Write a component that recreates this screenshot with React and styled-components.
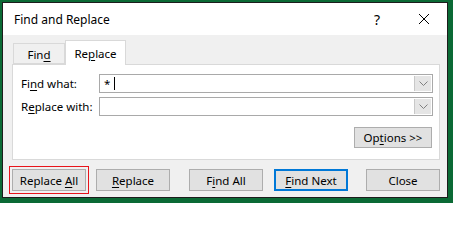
import styled, { createGlobalStyle } from "styled-components";

const Global = createGlobalStyle`
  html, body {
    margin: 0;
    padding: 0;
    background: #fff;
  }
  * {
    box-sizing: border-box;
  }
`;

const Frame = styled.div`
  width: 453px;
  height: 203px;
  background: #0b6a35;
  padding: 2px 5px 5px 2px;
  font-family: "Noto Sans", "DejaVu Sans", sans-serif;
  font-size: 11.5px;
  color: #000;
`;

const Window = styled.div`
  height: 100%;
  border: 1px solid #1c1c1c;
  background: #f0f0f0;
  display: flex;
  flex-direction: column;
`;

const TitleBar = styled.div`
  height: 32px;
  background: #fff;
  display: flex;
  align-items: center;
  padding-left: 11px;
  flex-shrink: 0;
`;

const Title = styled.div`
  flex: 1;
  font-size: 12px;
`;

const Help = styled.div`
  width: 14px;
  font-size: 14px;
  margin-right: 34px;
  text-align: center;
`;

const CloseX = styled.div`
  width: 12px;
  height: 12px;
  margin-right: 17px;
  display: flex;
`;

const Body = styled.div`
  flex: 1;
  padding: 5px 7px 0 9px;
  display: flex;
  flex-direction: column;
`;

const TabRow = styled.div`
  display: flex;
  align-items: flex-end;
  padding-left: 1px;
  height: 24px;
  position: relative;
  z-index: 1;
`;

const Tab = styled.div`
  height: ${(p) => (p.$active ? "25px" : "21px")};
  width: ${(p) => p.$w}px;
  margin-bottom: ${(p) => (p.$active ? "-1px" : "0")};
  background: ${(p) => (p.$active ? "#fff" : "#f0f0f0")};
  border: 1px solid #d9d9d9;
  border-bottom: ${(p) => (p.$active ? "none" : "1px solid #d9d9d9")};
  border-left: ${(p) => (p.$first || p.$active ? "1px solid #d9d9d9" : "none")};
  display: flex;
  align-items: center;
  justify-content: center;
  padding-top: ${(p) => (p.$active ? "0" : "1px")};
`;

const Panel = styled.div`
  width: 428px;
  height: 96px;
  background: #fff;
  border: 1px solid #d9d9d9;
  padding: 9px 6px 0 8px;
  display: flex;
  flex-direction: column;
  gap: 4px;
`;

const FieldRow = styled.div`
  display: flex;
  align-items: center;
`;

const Label = styled.div`
  width: 78px;
`;

const Combo = styled.div`
  flex: 1;
  height: 19px;
  border: 1px solid #a9a9a9;
  display: flex;
  background: #fff;
`;

const Input = styled.div`
  flex: 1;
  padding-left: 4px;
  display: flex;
  align-items: center;
  line-height: 17px;
`;

const Caret = styled.span`
  display: inline-block;
  width: 1px;
  height: 13px;
  background: #000;
  margin-left: 4px;
`;

const Arrow = styled.div`
  width: 17px;
  margin: 1px;
  background: #e5e5e5;
  border-left: 1px solid #c8c8c8;
  display: flex;
  align-items: center;
  justify-content: center;
`;

const OptionsRow = styled.div`
  display: flex;
  justify-content: flex-end;
  padding-right: 1px;
  margin-top: 7px;
`;

const Button = styled.div`
  width: ${(p) => p.$w || 74}px;
  height: ${(p) => p.$h || 22}px;
  margin-left: ${(p) => p.$gap || 0}px;
  background: #e1e1e1;
  border: ${(p) => (p.$default ? "2px solid #0078d7" : "1px solid #adadad")};
  display: flex;
  align-items: center;
  justify-content: center;
  outline: ${(p) => (p.$marked ? "1px solid #e8141b" : "none")};
  outline-offset: 2px;
`;

const ButtonRow = styled.div`
  display: flex;
  margin-top: 9px;
`;

const U = styled.span`
  text-decoration: underline;
  text-underline-offset: 2px;
`;

const Chevron = () => (
  <svg width="9" height="5" viewBox="0 0 9 5">
    <polyline points="0.5,0.5 4.5,4.5 8.5,0.5" fill="none" stroke="#808080" strokeWidth="1" />
  </svg>
);

export default function App() {
  return (
    <>
      <Global />
      <Frame>
        <Window>
          <TitleBar>
            <Title>Find and Replace</Title>
            <Help>?</Help>
            <CloseX>
              <svg width="12" height="12" viewBox="0 0 12 12">
                <path d="M1 1 L11 11 M11 1 L1 11" stroke="#000" strokeWidth="1" />
              </svg>
            </CloseX>
          </TitleBar>
          <Body>
            <TabRow>
              <Tab $w={52} $first>
                <span>
                  Fin<U>d</U>
                </span>
              </Tab>
              <Tab $w={61} $active>
                <span>
                  Re<U>p</U>lace
                </span>
              </Tab>
            </TabRow>
            <Panel>
              <FieldRow>
                <Label>
                  Fi<U>n</U>d what:
                </Label>
                <Combo>
                  <Input>
                    *<Caret />
                  </Input>
                  <Arrow>
                    <Chevron />
                  </Arrow>
                </Combo>
              </FieldRow>
              <FieldRow>
                <Label>
                  R<U>e</U>place with:
                </Label>
                <Combo>
                  <Input />
                  <Arrow>
                    <Chevron />
                  </Arrow>
                </Combo>
              </FieldRow>
              <OptionsRow>
                <Button $w={78} $h={21}>
                  <span>
                    Op<U>t</U>ions &gt;&gt;
                  </span>
                </Button>
              </OptionsRow>
            </Panel>
            <ButtonRow>
              <Button $marked>
                <span>
                  Replace <U>A</U>ll
                </span>
              </Button>
              <Button $gap={10}>
                <span>
                  <U>R</U>eplace
                </span>
              </Button>
              <Button $gap={19}>
                <span>
                  F<U>i</U>nd All
                </span>
              </Button>
              <Button $gap={11} $default>
                <span>
                  <U>F</U>ind Next
                </span>
              </Button>
              <Button $gap={18}>Close</Button>
            </ButtonRow>
          </Body>
        </Window>
      </Frame>
    </>
  );
}
